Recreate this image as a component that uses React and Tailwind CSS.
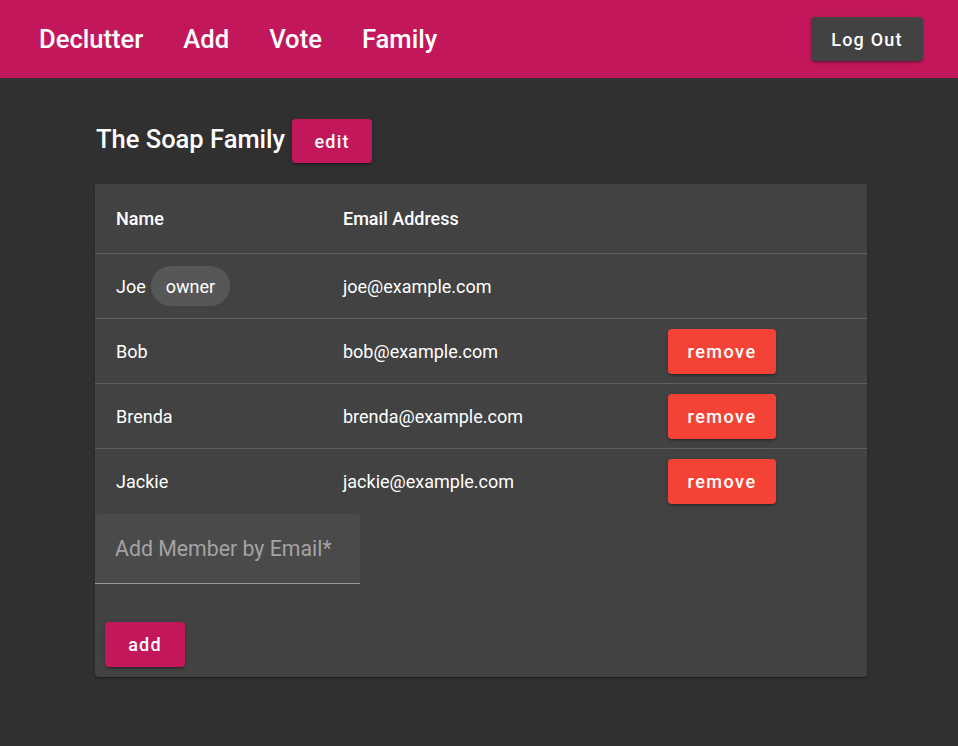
import React, { useState } from 'react';

const members = [
  { name: 'Joe', email: 'joe@example.com', owner: true },
  { name: 'Bob', email: 'bob@example.com' },
  { name: 'Brenda', email: 'brenda@example.com' },
  { name: 'Jackie', email: 'jackie@example.com' },
];

const App = () => {
  const [email, setEmail] = useState('');

  return (
    <div className="min-h-[746px] bg-[#303030] text-white font-['Roboto',sans-serif]">
      {/* Top bar */}
      <header className="h-[78px] bg-[#c2185b] flex items-center justify-between pl-[39px] pr-[35px]">
        <nav className="flex items-center gap-[40px] text-[25.6px] font-medium">
          <span>Declutter</span>
          <span>Add</span>
          <span>Vote</span>
          <span>Family</span>
        </nav>
        <button className="h-[44px] w-[112px] rounded-[4px] bg-[#424242] text-[18px] font-medium tracking-[1.2px] shadow-[0_3px_1px_-2px_rgba(0,0,0,0.2),0_2px_2px_0_rgba(0,0,0,0.14),0_1px_5px_0_rgba(0,0,0,0.12)]">
          Log Out
        </button>
      </header>

      <main className="w-[772px] ml-[95px] pt-[41px]">
        <div className="flex items-center gap-[7px] mb-[21px]">
          <h2 className="text-[25.5px] font-medium pl-px pb-[3px]">The Soap Family</h2>
          <button className="h-[44px] w-[80px] rounded-[4px] bg-[#c2185b] text-[18px] font-medium tracking-[1.2px] shadow-[0_3px_1px_-2px_rgba(0,0,0,0.2),0_2px_2px_0_rgba(0,0,0,0.14),0_1px_5px_0_rgba(0,0,0,0.12)]">
            edit
          </button>
        </div>

        {/* Members table */}
        <div className="bg-[#424242] shadow-[0_2px_1px_-1px_rgba(0,0,0,0.2),0_1px_1px_0_rgba(0,0,0,0.14),0_1px_3px_0_rgba(0,0,0,0.12)]">
          <div className="grid grid-cols-[227px_325px_1fr] h-[70px] items-center border-b border-[#5f5f5f] text-[18px] font-medium pl-[21px]">
            <span>Name</span>
            <span>Email Address</span>
            <span></span>
          </div>
          {members.map((m, i) => (
            <div
              key={m.email}
              className={`grid grid-cols-[227px_325px_1fr] h-[65px] items-center text-[18px] pl-[21px] ${i < members.length - 1 ? 'border-b border-[#5f5f5f]' : ''}`}
            >
              <span className="flex items-center gap-[5px]">
                {m.name}
                {m.owner && (
                  <span className="h-[40px] px-[15px] rounded-full bg-[#575757] flex items-center">owner</span>
                )}
              </span>
              <span>{m.email}</span>
              <span>
                {!m.owner && (
                  <button className="h-[45px] w-[108px] rounded-[4px] bg-[#f44336] text-[18px] font-medium tracking-[1.5px] shadow-[0_3px_1px_-2px_rgba(0,0,0,0.2),0_2px_2px_0_rgba(0,0,0,0.14),0_1px_5px_0_rgba(0,0,0,0.12)]">
                    remove
                  </button>
                )}
              </span>
            </div>
          ))}
        </div>

        {/* Add member form */}
        <div className="bg-[#424242] rounded-b-[4px] pb-[10px] shadow-[0_2px_1px_-1px_rgba(0,0,0,0.2),0_1px_1px_0_rgba(0,0,0,0.14),0_1px_3px_0_rgba(0,0,0,0.12)]">
          <div className="w-[265px] h-[70px] bg-[#4a4a4a] rounded-t-[4px] border-b border-[#9a9a9a] flex items-center">
            <input
              value={email}
              onChange={(e) => setEmail(e.target.value)}
              placeholder="Add Member by Email*"
              className="w-full bg-transparent px-[20px] pt-[1px] text-[21.3px] text-white placeholder-[#a3a3a3] outline-none"
            />
          </div>
          <div className="pl-[10px] pt-[38px]">
            <button className="h-[45px] w-[80px] rounded-[4px] bg-[#c2185b] text-[18px] font-medium tracking-[1.2px] shadow-[0_3px_1px_-2px_rgba(0,0,0,0.2),0_2px_2px_0_rgba(0,0,0,0.14),0_1px_5px_0_rgba(0,0,0,0.12)]">
              add
            </button>
          </div>
        </div>
      </main>
    </div>
  );
};

export default App;
